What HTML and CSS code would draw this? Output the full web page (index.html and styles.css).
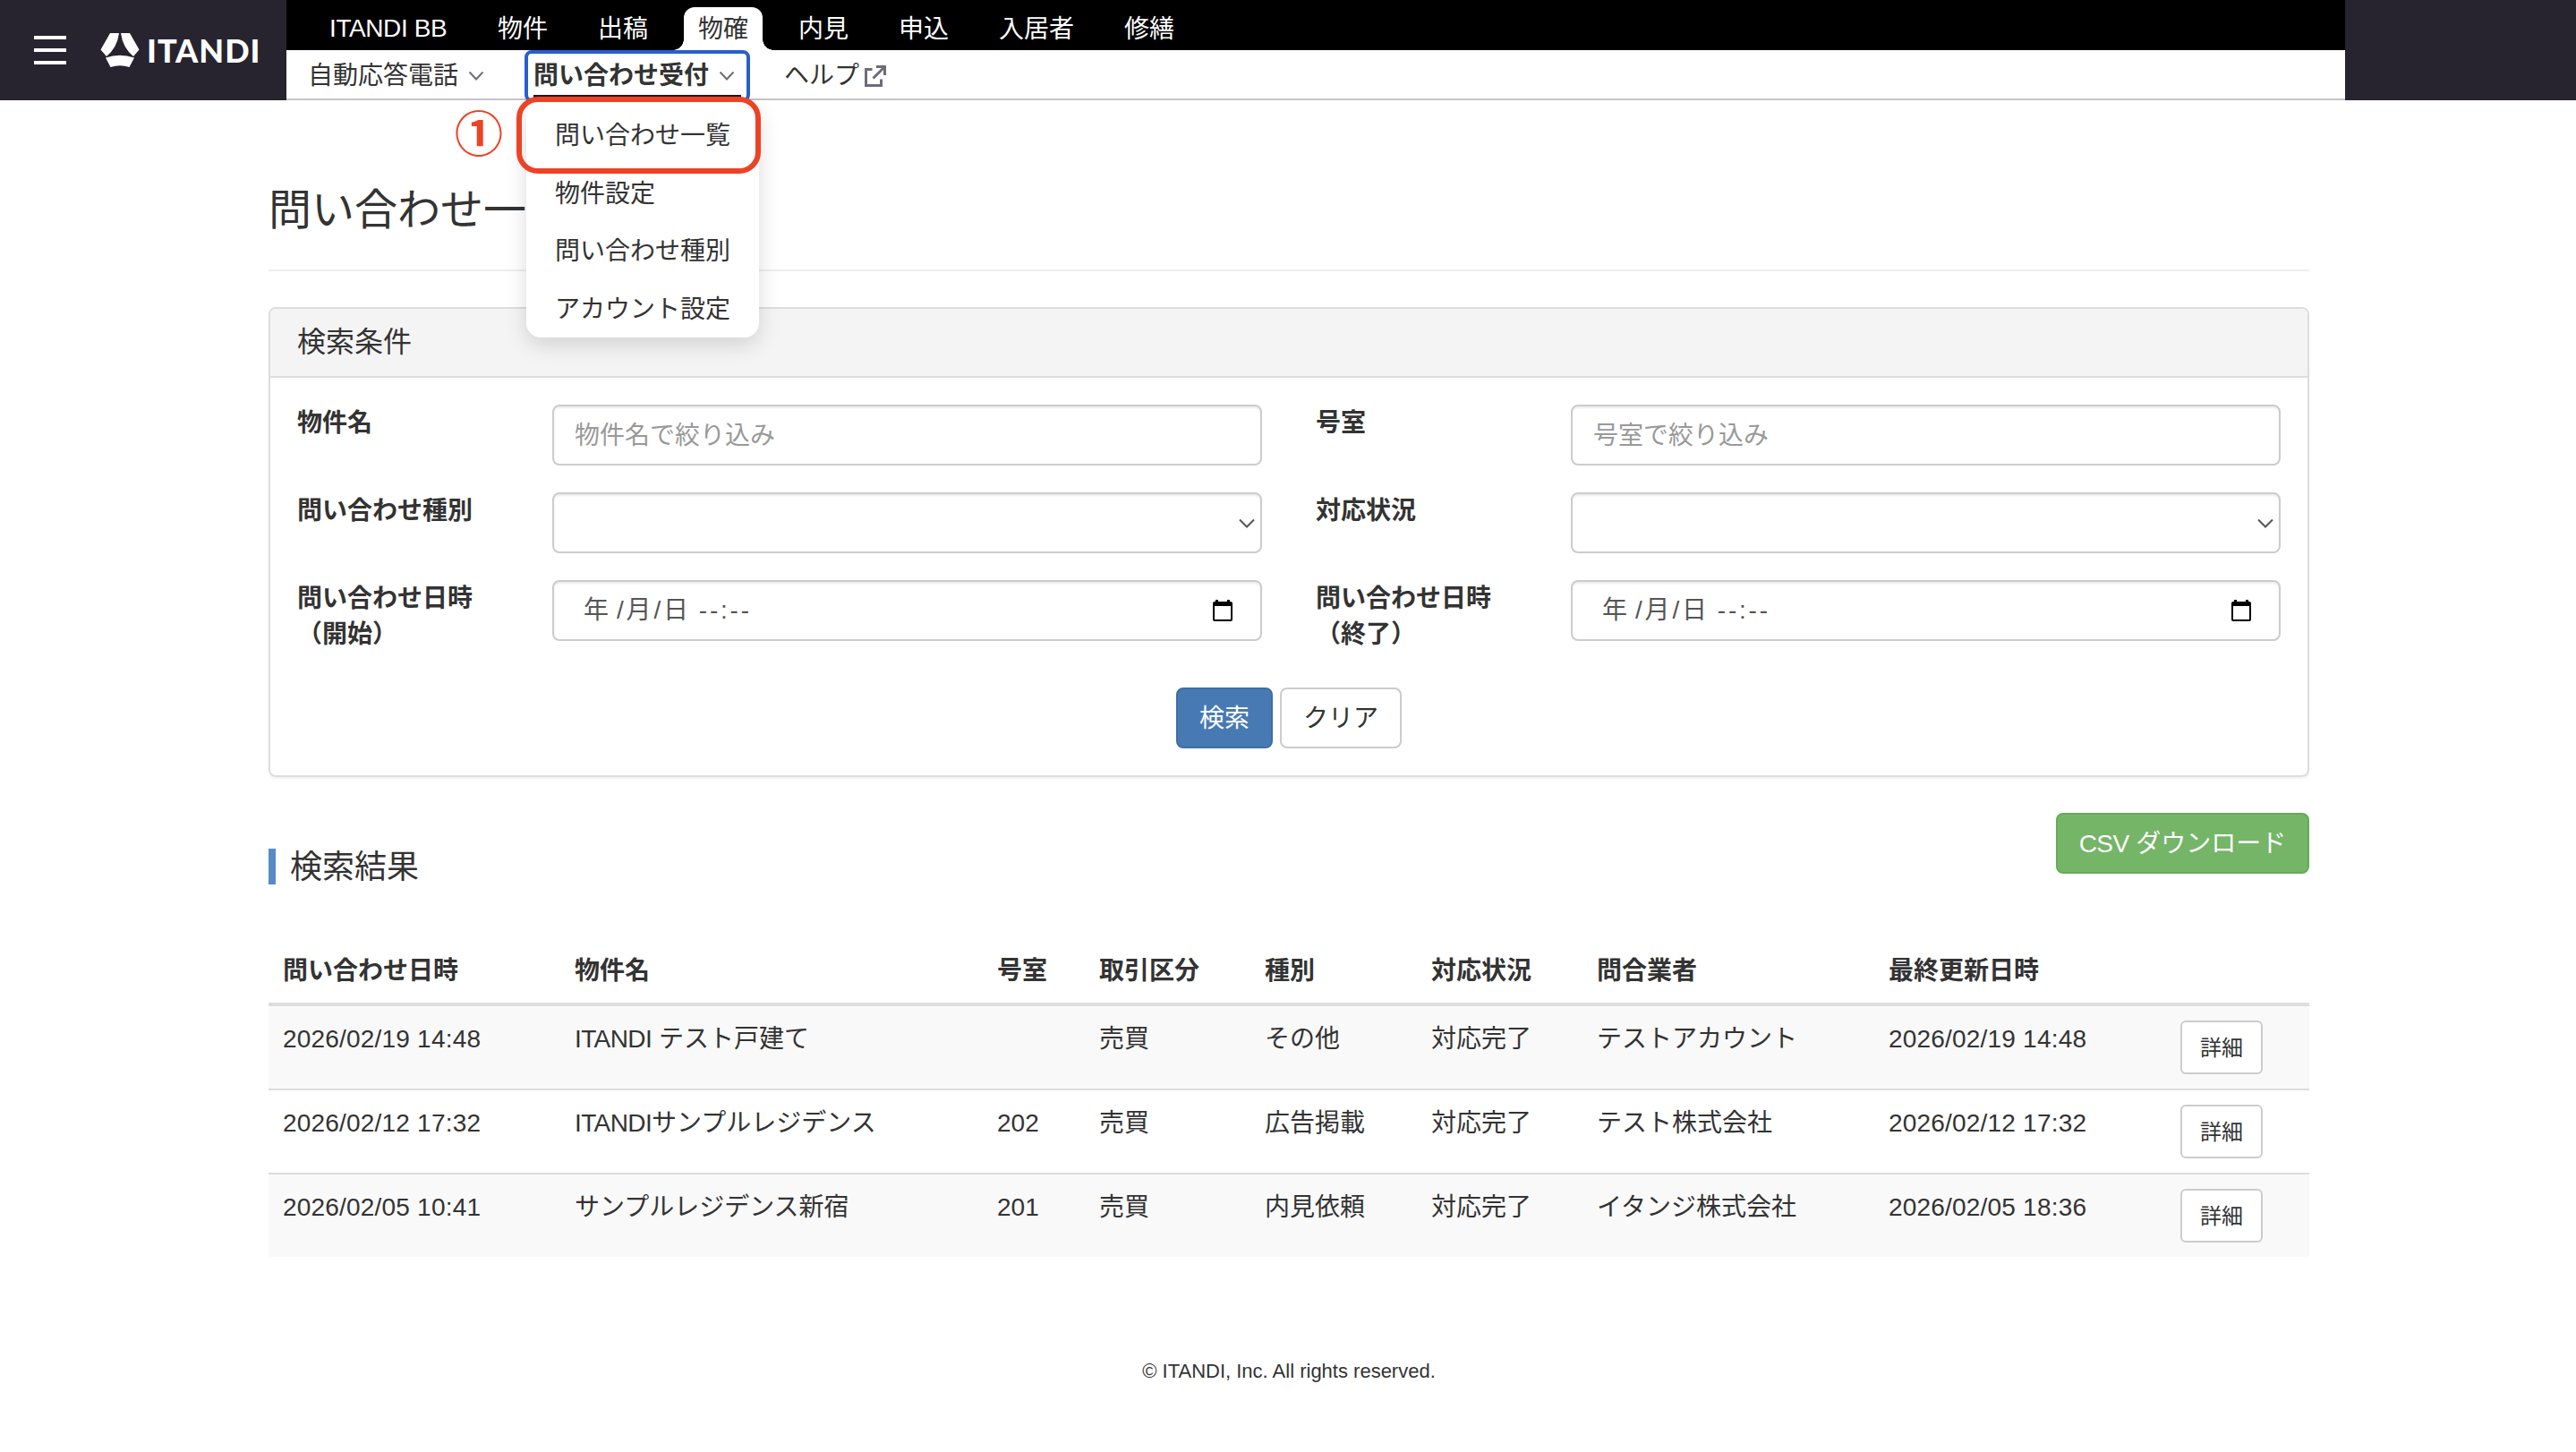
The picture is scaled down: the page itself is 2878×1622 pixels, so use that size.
FILE: index.html
```html
<!DOCTYPE html>
<html lang="ja">
<head>
    <meta charset="UTF-8">
    <title>問い合わせ一覧</title>
    <link rel="stylesheet" href="styles.css">
</head>
<body>
    <header class="header">
        <div class="brand">
            <div class="menu-icon"><span></span><span></span><span></span></div>
            <svg class="logo-mark" width="44" height="38" viewBox="0 0 44 38">
                <path fill="#fff" d="M11 0H21Q19 16 7 26L0.5 18.5ZM23 0H33L43.5 18.5L37 26Q25 16 23 0ZM6 27.5Q22 22 38 27.5L32.5 38Q22 34.5 11.5 38Z"/>
            </svg>
            <span class="logo-text">ITANDI</span>
        </div>
        <div class="navs">
            <nav class="global-nav">
                <a class="latin">ITANDI BB</a>
                <a>物件</a>
                <a>出稿</a>
                <a class="active">物確</a>
                <a>内見</a>
                <a>申込</a>
                <a>入居者</a>
                <a>修繕</a>
            </nav>
            <nav class="sub-nav">
                <a class="sub-item">自動応答電話
                    <svg class="chevron" width="16" height="10" viewBox="0 0 16 10"><path d="M0.5 0.5L8 8.5L15.5 0.5"/></svg>
                </a>
                <div class="sub-item current">問い合わせ受付
                    <svg class="chevron" width="16" height="10" viewBox="0 0 16 10"><path d="M0.5 0.5L8 8.5L15.5 0.5"/></svg>
                    <ul class="dropdown">
                        <li class="marked">問い合わせ一覧</li>
                        <li>物件設定</li>
                        <li>問い合わせ種別</li>
                        <li>アカウント設定</li>
                    </ul>
                    <span class="step">①</span>
                </div>
                <a class="sub-item">ヘルプ
                    <svg class="external" width="24" height="24" viewBox="0 0 24 24"><path d="M8.5 4.5H1.5V22.5H18.5V15.5M13 1.5H22.5V11M22.5 1.5L9.5 14.5"/></svg>
                </a>
            </nav>
        </div>
    </header>

    <main class="container">
        <h1 class="page-title">問い合わせ一覧</h1>

        <section class="panel">
            <div class="panel-heading">検索条件</div>
            <div class="panel-body">
                <div class="form-grid">
                    <label>物件名</label>
                    <div class="field placeholder">物件名で絞り込み</div>
                    <label>号室</label>
                    <div class="field placeholder">号室で絞り込み</div>

                    <label>問い合わせ種別</label>
                    <div class="field select">
                        <svg width="18" height="12" viewBox="0 0 18 12"><path d="M1 1.5L9 9.5L17 1.5"/></svg>
                    </div>
                    <label>対応状況</label>
                    <div class="field select">
                        <svg width="18" height="12" viewBox="0 0 18 12"><path d="M1 1.5L9 9.5L17 1.5"/></svg>
                    </div>

                    <label>問い合わせ日時<br>（開始）</label>
                    <div class="field date">
                        <span>年</span><span class="month">/月/日</span><span class="time">--:--</span>
                        <svg width="22" height="24" viewBox="0 0 22 24"><path fill-rule="evenodd" d="M3 0H6V2H16V0H19V2H20Q22 2 22 4V22Q22 24 20 24H2Q0 24 0 22V4Q0 2 2 2H3ZM2 7V22H20V7Z"/></svg>
                    </div>
                    <label>問い合わせ日時<br>（終了）</label>
                    <div class="field date">
                        <span>年</span><span class="month">/月/日</span><span class="time">--:--</span>
                        <svg width="22" height="24" viewBox="0 0 22 24"><path fill-rule="evenodd" d="M3 0H6V2H16V0H19V2H20Q22 2 22 4V22Q22 24 20 24H2Q0 24 0 22V4Q0 2 2 2H3ZM2 7V22H20V7Z"/></svg>
                    </div>
                </div>
                <div class="form-actions">
                    <button class="btn btn-primary">検索</button>
                    <button class="btn">クリア</button>
                </div>
            </div>
        </section>

        <div class="result-head">
            <h2>検索結果</h2>
            <button class="btn btn-success"><span class="latin">CSV</span> ダウンロード</button>
        </div>

        <table class="table">
            <colgroup>
                <col class="col-date"><col class="col-name"><col class="col-room"><col class="col-deal"><col class="col-kind"><col class="col-status"><col class="col-date"><col class="col-date"><col>
            </colgroup>
            <thead>
                <tr>
                    <th>問い合わせ日時</th><th>物件名</th><th>号室</th><th>取引区分</th><th>種別</th><th>対応状況</th><th>問合業者</th><th>最終更新日時</th><th></th>
                </tr>
            </thead>
            <tbody>
                <tr>
                    <td class="datetime">2026/02/19 14:48</td><td><span class="latin">ITANDI</span> テスト戸建て</td><td></td><td>売買</td><td>その他</td><td>対応完了</td><td>テストアカウント</td><td class="datetime">2026/02/19 14:48</td>
                    <td class="action"><button class="btn btn-sm">詳細</button></td>
                </tr>
                <tr>
                    <td class="datetime">2026/02/12 17:32</td><td><span class="latin">ITANDI</span>サンプルレジデンス</td><td>202</td><td>売買</td><td>広告掲載</td><td>対応完了</td><td>テスト株式会社</td><td class="datetime">2026/02/12 17:32</td>
                    <td class="action"><button class="btn btn-sm">詳細</button></td>
                </tr>
                <tr>
                    <td class="datetime">2026/02/05 10:41</td><td>サンプルレジデンス新宿</td><td>201</td><td>売買</td><td>内見依頼</td><td>対応完了</td><td>イタンジ株式会社</td><td class="datetime">2026/02/05 18:36</td>
                    <td class="action"><button class="btn btn-sm">詳細</button></td>
                </tr>
            </tbody>
        </table>
    </main>

    <footer class="footer">© ITANDI, Inc. All rights reserved.</footer>
</body>
</html>
```
FILE: styles.css
```css
*,
*::before,
*::after {
    box-sizing: border-box;
}
body {
    margin: 0;
    background: #fff;
    color: #333;
    font-family: "Liberation Sans", "Noto Sans CJK JP", sans-serif;
    font-size: 28px;
    line-height: 40px;
}
.latin {
    letter-spacing: -0.6px;
}

/* header */
.header {
    display: flex;
    height: 112px;
    background: #27242f;
}
.brand {
    display: flex;
    align-items: center;
    width: 320px;
    padding-left: 38px;
}
.menu-icon {
    display: flex;
    flex-direction: column;
    gap: 10px;
    width: 36px;
    margin-right: 38px;
}
.menu-icon span {
    height: 4px;
    background: #fff;
}
.logo-text {
    margin-left: 8px;
    color: #fff;
    font-family: Lato, sans-serif;
    font-size: 36px;
    font-weight: 900;
    letter-spacing: 1px;
}
.navs {
    width: 2300px;
}
.global-nav {
    display: flex;
    align-items: flex-end;
    gap: 24px;
    height: 56px;
    padding-left: 32px;
    background: #000;
    color: #fff;
}
.global-nav a {
    height: 48px;
    padding: 5px 16px 3px;
}
.global-nav .latin {
    width: 164px;
    padding-top: 4px;
    letter-spacing: -0.4px;
    white-space: nowrap;
}
.global-nav .active {
    position: relative;
    border-radius: 12px 12px 0 0;
    background: #fff;
    color: #333;
}
/* curved feet of the active tab */
.global-nav .active::before,
.global-nav .active::after {
    content: "";
    position: absolute;
    bottom: 0;
    width: 12px;
    height: 12px;
}
.global-nav .active::before {
    right: 100%;
    background: radial-gradient(circle at 0 0, #000 11.5px, #fff 12px);
}
.global-nav .active::after {
    left: 100%;
    background: radial-gradient(circle at 100% 0, #000 11.5px, #fff 12px);
}
.sub-nav {
    display: flex;
    gap: 48px;
    height: 56px;
    padding-left: 24px;
    border-bottom: 2px solid #c4c3cb;
    background: #fff;
}
.sub-item {
    display: flex;
    align-items: center;
    height: 54px;
    padding-top: 3px;
    white-space: nowrap;
}
.sub-item svg {
    fill: none;
    stroke: #6e6c78;
    stroke-width: 2;
}
.sub-item .chevron {
    margin: 0 8px 0 12px;
}
.sub-item .external {
    margin-left: 6px;
    stroke-width: 3;
}
.current {
    position: relative;
    border-bottom: 4px solid #1c1929;
    padding-top: 7px;
    font-weight: bold;
}
/* focus ring */
.current::before {
    content: "";
    position: absolute;
    top: 0;
    right: -10px;
    left: -10px;
    height: 58px;
    border: 4px solid #2660c9;
    border-radius: 8px;
}
.dropdown {
    position: absolute;
    top: 58px;
    left: -8px;
    z-index: 2;
    width: 260px;
    height: 263px;
    margin: 0;
    padding: 5px 0;
    border-radius: 16px;
    background: #fff;
    box-shadow: 0 8px 24px rgba(0, 0, 0, 0.14);
    font-weight: normal;
    list-style: none;
}
.dropdown li {
    height: 64.5px;
    padding: 13px 32px;
}
.marked::after {
    content: "";
    position: absolute;
    top: -6px;
    left: -11px;
    width: 273px;
    height: 86px;
    border: 6px solid #ec4326;
    border-radius: 24px;
}
.step {
    position: absolute;
    top: 64px;
    left: -88px;
    color: #ec4326;
    font-family: "Noto Sans CJK JP", sans-serif;
    font-size: 54px;
    font-weight: bold;
    line-height: 54px;
}

/* search form */
.container {
    width: 2280px;
    margin-left: 300px;
}
.page-title {
    height: 191px;
    margin: 0 0 40px;
    padding-top: 93px;
    border-bottom: 2px solid #eee;
    font-size: 48px;
    font-weight: normal;
    line-height: 60px;
}
.panel {
    height: 525px;
    border: 2px solid #ddd;
    border-radius: 8px;
    box-shadow: 0 2px 2px rgba(0, 0, 0, 0.05);
}
.panel-heading {
    height: 77px;
    padding: 17px 30px;
    border-bottom: 2px solid #ddd;
    border-radius: 6px 6px 0 0;
    background: #f4f4f4;
    font-size: 32px;
}
.panel-body {
    padding: 30px;
}
.form-grid {
    display: grid;
    grid-template-columns: 285px 793px 345px 793px;
    grid-auto-rows: 68px;
    row-gap: 30px;
}
.form-grid label {
    padding-top: 1px;
    font-weight: bold;
}
.form-grid label:nth-child(4n + 3) {
    margin-left: 60px;
}
.field {
    display: flex;
    align-items: center;
    padding: 1px 24px 0 23px;
    border: 2px solid #ccc;
    border-radius: 8px;
    box-shadow: inset 0 2px 2px rgba(0, 0, 0, 0.075);
}
.placeholder {
    color: #999;
}
.select {
    justify-content: flex-end;
    padding-right: 6px;
}
.select svg {
    fill: none;
    stroke: #555;
    stroke-width: 2;
}
.date {
    padding: 0 31px 0 33px;
    color: #555;
}
.month {
    margin-left: 9px;
    letter-spacing: 2.8px;
}
.time {
    margin-left: 9px;
    letter-spacing: 2.8px;
}
.date svg {
    margin-left: auto;
    fill: #000;
}
.form-actions {
    display: flex;
    justify-content: center;
    gap: 8px;
    margin-top: 52px;
}
.btn {
    height: 68px;
    padding: 1px 24px 0;
    border: 2px solid #ccc;
    border-radius: 8px;
    background: #fff;
    color: #333;
    font: inherit;
}
.btn-primary {
    border-color: #3f6da6;
    background: #477ab3;
    color: #fff;
}
.btn-success {
    width: 283px;
    padding: 1px 0 0;
    border-color: #67aa58;
    background: #74b567;
    color: #fff;
}
.btn-sm {
    display: block;
    height: 60px;
    padding: 1px 20px 0;
    border-radius: 6px;
    font-size: 24px;
}

/* results */
.result-head {
    display: flex;
    justify-content: space-between;
    height: 140px;
    margin-top: 40px;
}
.result-head h2 {
    height: 40px;
    margin: 40px 0 0;
    padding-left: 16px;
    border-left: 8px solid #568bc6;
    font-size: 36px;
    font-weight: normal;
    line-height: 42px;
}
.table {
    width: 100%;
    table-layout: fixed;
    border-spacing: 0;
}
.col-date { width: 326px; }
.col-name { width: 472px; }
.col-room { width: 114px; }
.col-deal { width: 185px; }
.col-kind { width: 186px; }
.col-status { width: 185px; }
.table th,
.table td {
    padding: 17px 16px 15px;
    text-align: left;
    vertical-align: top;
    white-space: nowrap;
}
.table th {
    height: 76px;
    border-bottom: 4px solid #ddd;
}
.table td {
    height: 94px;
    border-top: 2px solid #ddd;
}
.table tbody tr:first-child td {
    height: 92px;
    border-top: 0;
}
.table .action {
    padding: 16px;
}
.table tbody tr:nth-child(odd) {
    background: #f9f9f9;
}
.datetime {
    letter-spacing: 0.2px;
}

.footer {
    margin-top: 108px;
    padding-left: 2px;
    font-size: 22px;
    text-align: center;
}
```
